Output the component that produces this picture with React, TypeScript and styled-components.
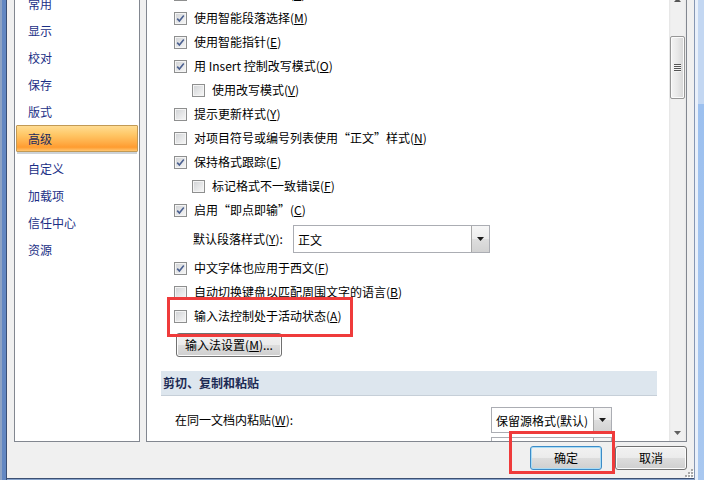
import styled, { createGlobalStyle } from 'styled-components';

const GlobalStyle = createGlobalStyle`
  html, body {
    margin: 0;
    padding: 0;
    overflow: hidden;
    background: #f0f0f0;
  }
  body {
    font-family: "Noto Sans CJK SC", "Microsoft YaHei", sans-serif;
    font-size: 12px;
    color: #000;
  }
`;

type Opt = { text: string; k: string; checked: boolean; indent?: boolean };

const navItems = ['常用', '显示', '校对', '保存', '版式', '高级', '自定义', '加载项', '信任中心', '资源'];

const editTop: Opt[] = [
  { text: '自动创建绘图画布', k: 'A', checked: true },
  { text: '使用智能段落选择', k: 'M', checked: true },
  { text: '使用智能指针', k: 'E', checked: true },
  { text: '用 Insert 控制改写模式', k: 'O', checked: true },
  { text: '使用改写模式', k: 'V', checked: false, indent: true },
  { text: '提示更新样式', k: 'Y', checked: false },
  { text: '对项目符号或编号列表使用“正文”样式', k: 'N', checked: false },
  { text: '保持格式跟踪', k: 'E', checked: true },
  { text: '标记格式不一致错误', k: 'F', checked: false, indent: true },
  { text: '启用“即点即输”', k: 'C', checked: true },
];

const editBottom: Opt[] = [
  { text: '中文字体也应用于西文', k: 'F', checked: true },
  { text: '自动切换键盘以匹配周围文字的语言', k: 'B', checked: false },
  { text: '输入法控制处于活动状态', k: 'A', checked: false },
];

const Mn = ({ k }: { k: string }) => (
  <>
    (<u>{k}</u>)
  </>
);

const CheckBox = ({ checked }: { checked: boolean }) => (
  <Box>
    {checked && (
      <svg width="9" height="9" viewBox="0 0 9 9">
        <path d="M1.2 4.6 L3.4 7 L7.8 1.6" fill="none" stroke="#4b6090" strokeWidth="1.6" />
      </svg>
    )}
  </Box>
);

const Arrow = () => (
  <svg width="7" height="4" viewBox="0 0 7 4">
    <path d="M0 0 H7 L3.5 4 Z" fill="#1a1a1a" />
  </svg>
);

const App = () => {
  return (
    <Window>
      <GlobalStyle />
      <LeftFrame />
      <Body>
        <Panels>
          <NavPanel>
            <NavList>
              {navItems.map((n) => (
                <NavItem key={n} $active={n === '高级'}>
                  {n}
                </NavItem>
              ))}
            </NavList>
          </NavPanel>

          <ContentPanel>
            <ContentScroll>
              <OptionList>
                {editTop.map((o) => (
                  <CheckRow key={o.text} $indent={o.indent}>
                    <CheckBox checked={o.checked} />
                    <span>
                      {o.text}
                      <Mn k={o.k} />
                    </span>
                  </CheckRow>
                ))}

                <ComboRow>
                  <FieldLabel $w={100}>
                    默认段落样式<Mn k="Y" />:
                  </FieldLabel>
                  <Combo $w={197} $h={28}>
                    <ComboText>正文</ComboText>
                    <ComboButton>
                      <Arrow />
                    </ComboButton>
                  </Combo>
                </ComboRow>

                {editBottom.map((o) => (
                  <CheckRow key={o.text} $indent={o.indent}>
                    <CheckBox checked={o.checked} />
                    <span>
                      {o.text}
                      <Mn k={o.k} />
                    </span>
                  </CheckRow>
                ))}

                <ButtonRow>
                  <Button $w={106}>
                    输入法设置<Mn k="M" />...
                  </Button>
                </ButtonRow>

                <SectionHeader>剪切、复制和粘贴</SectionHeader>

                <PasteRow $gap={11}>
                  <FieldLabel $w={316}>
                    在同一文档内粘贴<Mn k="W" />:
                  </FieldLabel>
                  <Combo $w={121} $h={26}>
                    <ComboText>保留源格式(默认)</ComboText>
                    <ComboButton>
                      <Arrow />
                    </ComboButton>
                  </Combo>
                </PasteRow>

                <PasteRow $gap={4}>
                  <FieldLabel $w={316}>
                    在文档之间粘贴<Mn k="B" />:
                  </FieldLabel>
                  <Combo $w={121} $h={26}>
                    <ComboText>保留源格式(默认)</ComboText>
                    <ComboButton>
                      <Arrow />
                    </ComboButton>
                  </Combo>
                </PasteRow>
              </OptionList>
            </ContentScroll>

            <ScrollBar>
              <ScrollUp>
                <svg width="7" height="4" viewBox="0 0 7 4">
                  <path d="M0 4 H7 L3.5 0 Z" fill="#555" />
                </svg>
              </ScrollUp>
              <Thumb style={{ marginTop: 30 }}>
                <Grip />
                <Grip />
                <Grip />
                <Grip />
              </Thumb>
              <ScrollDown>
                <svg width="7" height="4" viewBox="0 0 7 4">
                  <path d="M0 0 H7 L3.5 4 Z" fill="#606060" />
                </svg>
              </ScrollDown>
            </ScrollBar>
          </ContentPanel>
        </Panels>

        <Footer>
          <Button $w={72} $focused>
            确定
          </Button>
          <Button $w={72}>取消</Button>
        </Footer>

        <ResizeGrip width="10" height="10" viewBox="0 0 10 10">
          {[
            [7, 1],
            [4, 4],
            [7, 4],
            [1, 7],
            [4, 7],
            [7, 7],
          ].map(([x, y]) => (
            <g key={`${x}-${y}`}>
              <rect x={x + 1} y={y + 1} width="2" height="2" fill="#fff" />
              <rect x={x} y={y} width="2" height="2" fill="#a8a8a8" />
            </g>
          ))}
        </ResizeGrip>
      </Body>
      <RightFrame />

      <Mark $x={167} $y={297} $w={186} $h={40} />
      <Mark $x={509} $y={431} $w={106} $h={43} />
    </Window>
  );
};

export default App;

const Window = styled.div`
  position: relative;
  width: 704px;
  height: 480px;
  display: flex;
  align-items: flex-start;
  background: #86a2cb;
  overflow: hidden;
`;

const LeftFrame = styled.div`
  width: 7px;
  height: 480px;
  flex-shrink: 0;
  background: linear-gradient(
    to right,
    #8ea3c4 0,
    #8ea3c4 2px,
    #6388c3 2px,
    #6388c3 6px,
    #3b4f74 6px
  );
`;

const RightFrame = styled.div`
  width: 10px;
  height: 480px;
  flex-shrink: 0;
  box-sizing: border-box;
  border-left: 1px solid #8596b3;
  background: linear-gradient(to right, #e9f0fa 0, #e9f0fa 3px, transparent 3px),
    linear-gradient(to bottom, #c3d7f2 0, #c3d7f2 104px, #9cc0ef 104px, #a9c8f0 100%);
`;

const Body = styled.div`
  position: relative;
  flex: 1;
  height: 479px;
  box-sizing: border-box;
  border-bottom: 1px solid #3d5073;
  background: #f0f0f0;
  display: flex;
  flex-direction: column;
`;

const Panels = styled.div`
  height: 442px;
  display: flex;
  gap: 6px;
  padding: 0 7px;
`;

const NavPanel = styled.div`
  width: 126px;
  flex-shrink: 0;
  box-sizing: border-box;
  border: 1px solid #828790;
  border-top: none;
  background: #fff;
  padding: 0 1px;
  overflow: hidden;
`;

const NavList = styled.div`
  margin-top: -10px;
  display: flex;
  flex-direction: column;
`;

const NavItem = styled.div<{ $active?: boolean }>`
  height: 27px;
  box-sizing: border-box;
  padding-left: 11px;
  line-height: 25px;
  color: ${(p) => (p.$active ? '#1c2a5e' : '#1b2f86')};
  border: 1px solid ${(p) => (p.$active ? '#c29a55' : 'transparent')};
  border-radius: 1px;
  margin-bottom: ${(p) => (p.$active ? '3px' : '0')};
  background: ${(p) =>
    p.$active
      ? 'linear-gradient(#ffdc92 0%, #ffc766 35%, #ffae48 65%, #ff9c30 85%, #ffc670 100%)'
      : 'transparent'};
  box-shadow: ${(p) => (p.$active ? '0 3px 0 -1px #cdd3d8' : 'none')};
`;

const ContentPanel = styled.div`
  flex: 1;
  display: flex;
  box-sizing: border-box;
  border: 1px solid #828790;
  border-top: none;
  background: #fff;
  overflow: hidden;
`;

const ContentScroll = styled.div`
  flex: 1;
  overflow: hidden;
`;

const OptionList = styled.div`
  margin-top: -18px;
  padding: 0 12px 0 14px;
  display: flex;
  flex-direction: column;
`;

const CheckRow = styled.div<{ $indent?: boolean }>`
  height: 24px;
  display: flex;
  align-items: center;
  gap: 7px;
  padding-left: ${(p) => (p.$indent ? 31 : 13)}px;
  line-height: 16px;
  white-space: nowrap;
`;

const Box = styled.span`
  width: 13px;
  height: 13px;
  flex-shrink: 0;
  box-sizing: border-box;
  border: 1px solid #8e8f8f;
  padding: 1px;
  background: #f6f6f6;
  display: flex;
  align-items: center;
  justify-content: center;
  background-image: linear-gradient(135deg, #cfd1d4 0%, #e6e7e8 55%, #f7f7f7 100%);
  background-clip: content-box;
  box-shadow: inset 0 0 0 1px #f4f4f4;
`;

const ComboRow = styled.div`
  height: 34px;
  display: flex;
  align-items: center;
  padding-left: 32px;
  white-space: nowrap;
`;

const PasteRow = styled.div<{ $gap: number }>`
  margin-top: ${(p) => p.$gap}px;
  display: flex;
  align-items: center;
  padding-left: 14px;
  white-space: nowrap;
`;

const FieldLabel = styled.span<{ $w: number }>`
  width: ${(p) => p.$w}px;
  flex-shrink: 0;
  line-height: 16px;
`;

const Combo = styled.div<{ $w: number; $h: number }>`
  width: ${(p) => p.$w}px;
  height: ${(p) => p.$h}px;
  box-sizing: border-box;
  border: 1px solid #abadb3;
  background: #fff;
  display: flex;
`;

const ComboText = styled.span`
  flex: 1;
  padding-left: 4px;
  display: flex;
  align-items: center;
  overflow: hidden;
`;

const ComboButton = styled.span`
  width: 18px;
  box-sizing: border-box;
  border-left: 1px solid #a7a7a7;
  background: linear-gradient(#f6f6f6 0%, #ececec 50%, #dedede 50%, #d2d2d2 100%);
  display: flex;
  align-items: center;
  justify-content: center;
`;

const ButtonRow = styled.div`
  margin-top: 5px;
  padding-left: 15px;
  display: flex;
`;

const Button = styled.button<{ $w: number; $focused?: boolean }>`
  width: ${(p) => p.$w}px;
  height: 24px;
  padding: 0;
  box-sizing: border-box;
  border: 1px solid ${(p) => (p.$focused ? '#3c8bc7' : '#707070')};
  border-radius: 3px;
  background: linear-gradient(#f2f2f2 0%, #ebebeb 50%, #dddddd 50%, #cfcfcf 100%);
  box-shadow: inset 0 0 0 1px ${(p) => (p.$focused ? '#a8dcf6' : '#fcfcfc')};
  font-family: "Noto Sans CJK SC", "Microsoft YaHei", sans-serif;
  font-size: 12px;
  line-height: 16px;
  color: #000;
  white-space: nowrap;
`;

const SectionHeader = styled.div`
  margin-top: 14px;
  height: 25px;
  box-sizing: border-box;
  border-bottom: 1px solid #c6cfd8;
  background: #dde6ee;
  padding-left: 2px;
  line-height: 24px;
  font-weight: bold;
  color: #1c2b55;
`;

const ScrollBar = styled.div`
  width: 17px;
  flex-shrink: 0;
  background: linear-gradient(to right, #e4e4e4 0, #f0f0f0 2px, #f0f0f0 15px, #e8e8e8 17px);
  display: flex;
  flex-direction: column;
  align-items: center;
`;

const ScrollUp = styled.div`
  height: 6px;
  overflow: hidden;
  display: flex;
  align-items: flex-end;
  padding-bottom: 4px;
  box-sizing: border-box;
`;

const Thumb = styled.div`
  width: 15px;
  height: 63px;
  box-sizing: border-box;
  border: 1px solid #979797;
  border-radius: 2px;
  background: linear-gradient(to right, #f4f4f4 0%, #e8e8e8 50%, #d6d6d6 100%);
  box-shadow: inset 0 0 0 1px #fbfbfb;
  display: flex;
  flex-direction: column;
  align-items: center;
  justify-content: center;
  gap: 1px;
`;

const Grip = styled.span`
  width: 7px;
  height: 1px;
  background: #555;
  box-shadow: 0 1px 0 #f5f5f5;
`;

const ScrollDown = styled.div`
  margin-top: auto;
  height: 17px;
  display: flex;
  align-items: center;
  justify-content: center;
`;

const Footer = styled.div`
  flex: 1;
  display: flex;
  justify-content: flex-end;
  align-items: flex-start;
  gap: 13px;
  padding: 4px 7px 0 0;
`;

const ResizeGrip = styled.svg`
  position: absolute;
  right: 0;
  bottom: 0;
`;

const Mark = styled.div<{ $x: number; $y: number; $w: number; $h: number }>`
  position: absolute;
  left: ${(p) => p.$x}px;
  top: ${(p) => p.$y}px;
  width: ${(p) => p.$w}px;
  height: ${(p) => p.$h}px;
  box-sizing: border-box;
  border: 3px solid #ef3b3b;
  pointer-events: none;
`;
